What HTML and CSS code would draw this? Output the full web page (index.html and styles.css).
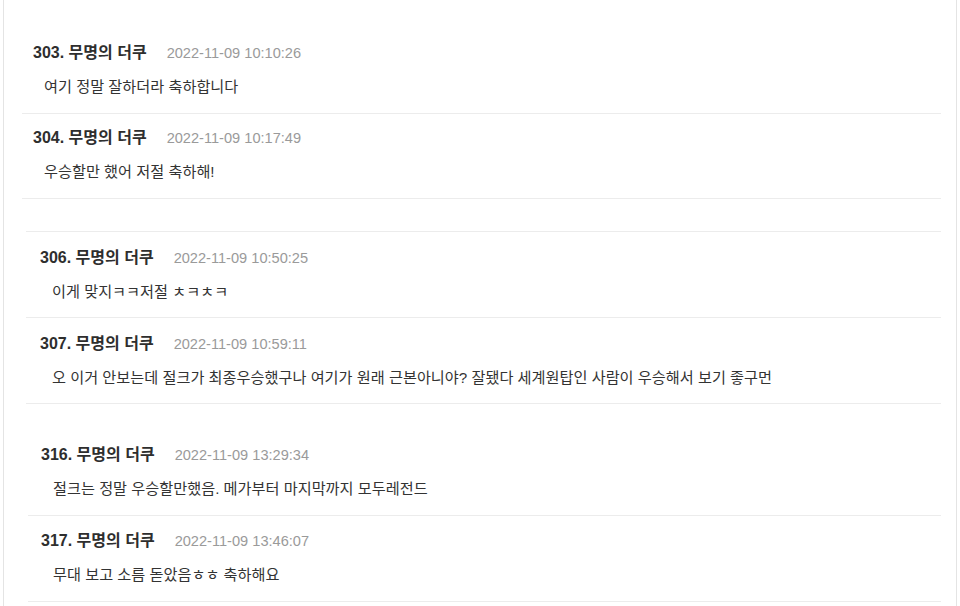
FILE: index.html
```html
<!DOCTYPE html>
<html lang="ko">
<head>
<meta charset="utf-8">
<title>댓글</title>
<link rel="stylesheet" href="styles.css">
</head>
<body>
<div class="page">
  <section class="group group-a">
    <div class="comment">
      <div class="head"><span class="name">303. 무명의 더쿠</span><span class="date">2022-11-09 10:10:26</span></div>
      <div class="text">여기 정말 잘하더라 축하합니다</div>
    </div>
    <div class="comment">
      <div class="head"><span class="name">304. 무명의 더쿠</span><span class="date">2022-11-09 10:17:49</span></div>
      <div class="text">우승할만 했어 저절 축하해!</div>
    </div>
  </section>
  <section class="group group-b">
    <div class="comment">
      <div class="head"><span class="name">306. 무명의 더쿠</span><span class="date">2022-11-09 10:50:25</span></div>
      <div class="text">이게 맞지ㅋㅋ저절 ㅊㅋㅊㅋ</div>
    </div>
    <div class="comment">
      <div class="head"><span class="name">307. 무명의 더쿠</span><span class="date">2022-11-09 10:59:11</span></div>
      <div class="text">오 이거 안보는데 절크가 최종우승했구나 여기가 원래 근본아니야? 잘됐다 세계원탑인 사람이 우승해서 보기 좋구먼</div>
    </div>
  </section>
  <section class="group group-c">
    <div class="comment">
      <div class="head"><span class="name">316. 무명의 더쿠</span><span class="date">2022-11-09 13:29:34</span></div>
      <div class="text">절크는 정말 우승할만했음. 메가부터 마지막까지 모두레전드</div>
    </div>
    <div class="comment">
      <div class="head"><span class="name">317. 무명의 더쿠</span><span class="date">2022-11-09 13:46:07</span></div>
      <div class="text">무대 보고 소름 돋았음ㅎㅎ 축하해요</div>
    </div>
  </section>
</div>
</body>
</html>
```

FILE: styles.css
```css
html, body {
  margin: 0;
  padding: 0;
  background: #ffffff;
}

body {
  font-family: "Liberation Sans", "Noto Sans CJK KR", sans-serif;
  color: #333333;
}

.page {
  margin: 0 3px;
  border-left: 1px solid #e4e4e4;
  border-right: 1px solid #e4e4e4;
  height: 606px;
  box-sizing: border-box;
  overflow: hidden;
}

.group {
  margin-right: 15px;
}

.comment {
  border-bottom: 1px solid #ececec;
}

.head {
  display: flex;
  align-items: baseline;
  line-height: 20px;
  height: 20px;
  white-space: nowrap;
}

.name {
  font-size: 16px;
  font-weight: bold;
  color: #2e2e2e;
}

.date {
  margin-left: 20px;
  font-size: 14.6px;
  color: #9a9a9a;
}

.text {
  margin-top: 14px;
  font-size: 15.2px;
  line-height: 20px;
  height: 20px;
  white-space: nowrap;
  color: #333333;
}

/* first block */
.group-a {
  padding-top: 29px;
  margin-left: 18px;
}
.group-a .comment {
  padding: 14px 0 16px 11px;
}
.group-a .text {
  padding-left: 11px;
}

/* second block */
.group-b {
  margin-top: 32px;
  margin-left: 22px;
  border-top: 1px solid #ececec;
}
.group-b .comment {
  padding: 16px 0 15px 14px;
}
.group-b .text {
  padding-left: 12px;
}

/* third block */
.group-c {
  margin-top: 26px;
  margin-left: 24px;
}
.group-c .comment {
  padding: 15px 0 16px 13px;
}
.group-c .text {
  padding-left: 12px;
}
```
